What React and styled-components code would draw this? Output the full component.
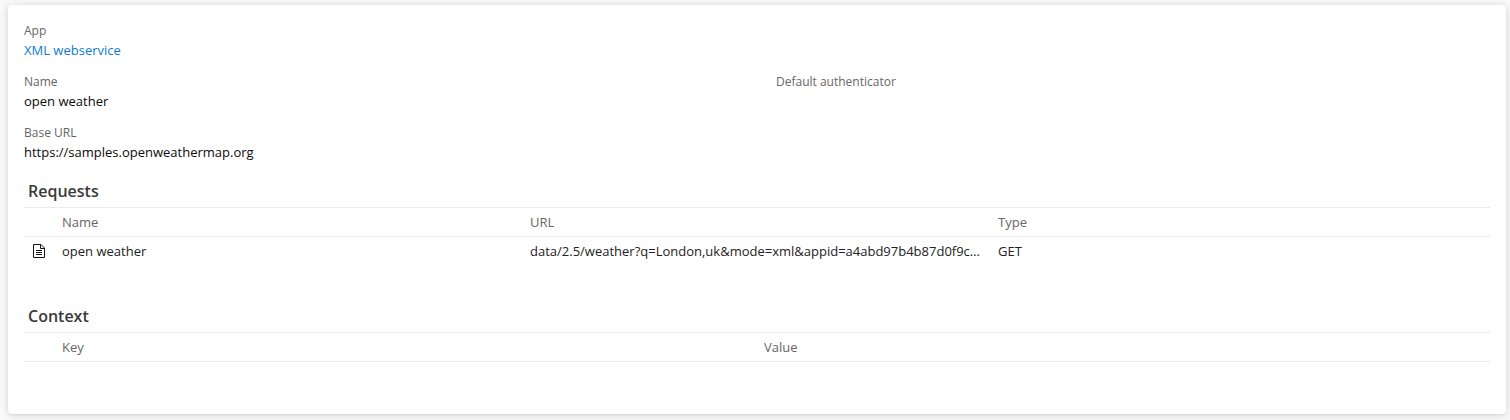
import React from "react";
import styled, { createGlobalStyle } from "styled-components";

const GlobalStyle = createGlobalStyle`
  * { box-sizing: border-box; }
  body { margin: 0; background: #fafafa; font-family: "Open Sans", "Noto Sans", sans-serif; font-size: 13px; color: #0a0a0a; overflow: hidden; }
`;

const Page = styled.main`
  height: 420px;
  padding: 5px 4px 6px 8px;
`;

const Card = styled.section`
  height: 409px;
  padding: 16px 16px 0;
  background: #fff;
  border-radius: 4px;
  box-shadow: 0 1px 2px rgba(0, 0, 0, 0.05), 0 1px 10px rgba(0, 0, 0, 0.16);
`;

const Fields = styled.dl`
  display: grid;
  grid-template-columns: 752px 1fr;
  grid-auto-rows: 51px;
  margin: 0;
`;

const Field = styled.div`
  grid-column: ${(p) => p.$column || 1};
`;

const Label = styled.dt`
  font-size: 12px;
  line-height: 20px;
  color: #666;
`;

const Value = styled.dd`
  margin: 0;
  line-height: 19px;
`;

const Link = styled.a`
  color: #0c7cd5;
  text-decoration: none;
`;

const Heading = styled.h2`
  height: 33px;
  margin: 0;
  padding-left: 4px;
  font-size: 16px;
  font-weight: 600;
  line-height: 34px;
  color: #3a3a3a;
`;

const Table = styled.div`
  height: ${(p) => p.$height}px;
  border-top: 1px solid #ebebeb;
`;

const Row = styled.div`
  display: grid;
  grid-template-columns: 38px ${(p) => p.$columns};
  height: 29px;
  line-height: 29px;
  color: ${(p) => (p.$head ? "#666" : "#222")};
  border-bottom: 1px solid ${(p) => (p.$head ? "#ebebeb" : "transparent")};
`;

const Cell = styled.div`
  overflow: hidden;
  padding-right: 16px;
  text-overflow: ellipsis;
  white-space: nowrap;
`;

const IconCell = styled.div`
  display: flex;
  align-items: center;
  padding-left: 9px;
`;

const requestColumns = "468px 468px 1fr";

export default function App() {
  return (
    <Page>
      <GlobalStyle />
      <Card>
        <Fields>
          <Field><Label>App</Label><Value><Link>XML webservice</Link></Value></Field>
          <Field><Label>Name</Label><Value>open weather</Value></Field>
          <Field $column={2}><Label>Default authenticator</Label></Field>
          <Field><Label>Base URL</Label><Value>https://samples.openweathermap.org</Value></Field>
        </Fields>
        <Heading>Requests</Heading>
        <Table $height={92}>
          <Row $head $columns={requestColumns}><span /><Cell>Name</Cell><Cell>URL</Cell><Cell>Type</Cell></Row>
          <Row $columns={requestColumns}>
            <IconCell>
              <svg width="12" height="14" viewBox="0 0 12 14" fill="none" stroke="#161616" aria-hidden="true">
                <path d="M.5 .5H8L11.5 4V13.5H.5ZM7.5 .5V4.5H11.5M3 6.5H9M3 8.5H9M3 10.5H9" />
              </svg>
            </IconCell>
            <Cell>open weather</Cell>
            <Cell>data/2.5/weather?q=London,uk&amp;mode=xml&amp;appid=a4abd97b4b87d0f9c…</Cell>
            <Cell>GET</Cell>
          </Row>
        </Table>
        <Heading>Context</Heading>
        <Table $height={60}>
          <Row $head $columns="702px 1fr"><span /><Cell>Key</Cell><Cell>Value</Cell></Row>
        </Table>
      </Card>
    </Page>
  );
}
